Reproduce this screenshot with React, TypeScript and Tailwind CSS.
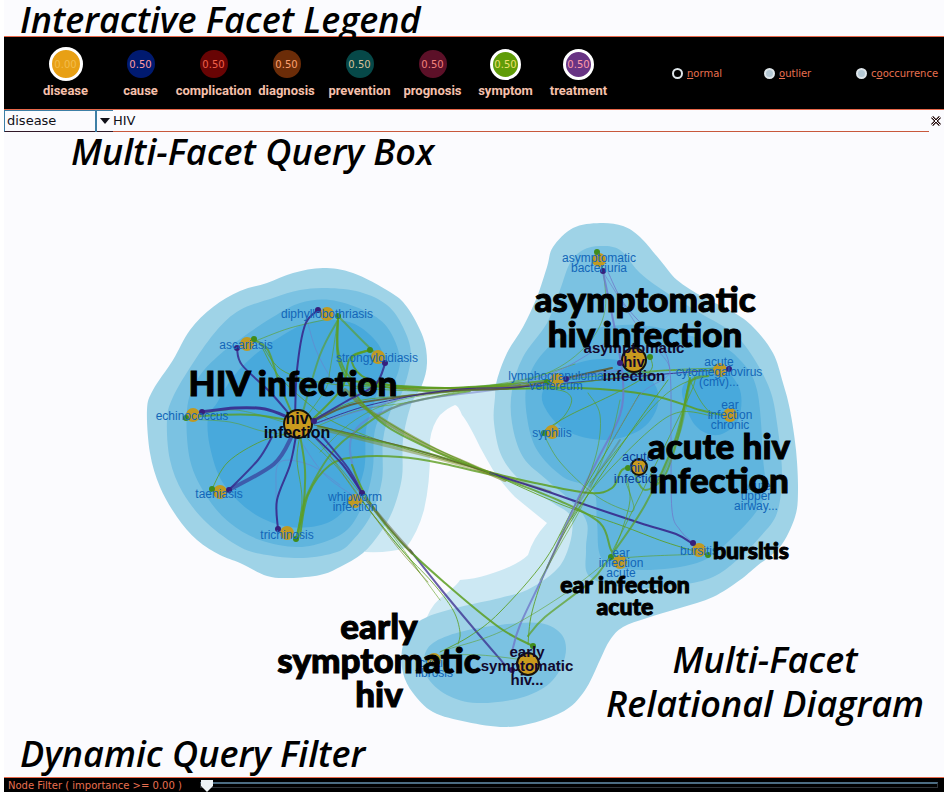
import { useState } from "react";

type Point = [number, number];

/** Turns a list of points into a smooth Catmull-Rom curve. */
function curve(points: Point[], closed = false): string {
  const n = points.length;
  const at = (i: number): Point =>
    closed ? points[(i + n) % n] : points[Math.max(0, Math.min(n - 1, i))];
  const segments = closed ? n : n - 1;
  let d = `M${points[0][0]} ${points[0][1]}`;
  for (let i = 0; i < segments; i++) {
    const [a, b, c, e] = [at(i - 1), at(i), at(i + 1), at(i + 2)];
    d += `C${b[0] + (c[0] - a[0]) / 6} ${b[1] + (c[1] - a[1]) / 6} ${c[0] - (e[0] - b[0]) / 6} ${c[1] - (e[1] - b[1]) / 6} ${c[0]} ${c[1]}`;
  }
  return closed ? d + "Z" : d;
}

const contours: { fill: string; points: Point[] }[] = [
  {
    fill: "#9fd3e7",
    points: [[147, 410], [153, 390], [173, 360], [190, 330], [213, 307], [240, 291], [267, 283], [293, 273], [323, 268], [353, 273], [390, 292], [407, 307], [423, 337], [427, 363], [422, 385], [411, 405], [403, 440], [402, 477], [393, 510], [380, 533], [363, 553], [340, 567], [320, 575], [290, 578], [267, 576], [240, 563], [220, 555], [197, 540], [177, 517], [160, 487], [150, 453]],
  },
  {
    fill: "#7bc2e2",
    points: [[167, 420], [173, 397], [193, 363], [217, 330], [240, 310], [273, 298], [300, 290], [327, 288], [360, 292], [387, 305], [403, 327], [411, 355], [403, 390], [391, 410], [383, 440], [382, 480], [371, 515], [353, 540], [337, 552], [303, 558], [267, 555], [240, 547], [207, 523], [183, 493], [170, 460]],
  },
  {
    fill: "#60b5de",
    points: [[187, 410], [197, 380], [217, 357], [243, 337], [273, 317], [300, 303], [330, 300], [363, 310], [387, 327], [400, 360], [390, 393], [375, 430], [373, 467], [366, 497], [350, 527], [327, 541], [297, 547], [260, 540], [230, 523], [207, 497], [190, 460]],
  },
  {
    fill: "#48a9dc",
    points: [[208, 417], [217, 403], [233, 377], [257, 353], [280, 337], [307, 323], [337, 320], [360, 327], [380, 347], [383, 370], [374, 403], [366, 430], [364, 470], [350, 503], [327, 523], [290, 527], [253, 513], [223, 483], [210, 447]],
  },
  {
    fill: "#9fd3e7",
    points: [[600, 223], [623, 226], [640, 237], [660, 260], [677, 280], [703, 297], [733, 312], [753, 327], [773, 353], [783, 383], [790, 410], [796, 450], [798, 490], [795, 517], [780, 547], [757, 566], [740, 580], [713, 597], [680, 608], [647, 618], [623, 627], [610, 640], [600, 660], [587, 687], [570, 707], [543, 720], [507, 727], [467, 722], [433, 712], [413, 693], [403, 673], [402, 650], [410, 630], [427, 617], [460, 607], [500, 598], [527, 590], [553, 573], [565, 557], [572, 533], [570, 515], [553, 503], [523, 483], [502, 457], [494, 423], [495, 397], [497, 380], [507, 353], [523, 327], [537, 297], [547, 267], [553, 247], [573, 228]],
  },
  {
    fill: "#7bc2e2",
    points: [[600, 246], [620, 250], [640, 273], [667, 293], [700, 313], [733, 333], [753, 357], [770, 390], [777, 423], [782, 473], [777, 513], [760, 537], [737, 560], [713, 577], [680, 585], [630, 588], [590, 577], [586, 550], [587, 523], [573, 503], [547, 480], [523, 457], [512, 423], [512, 390], [523, 357], [547, 323], [560, 290], [570, 263], [583, 250]],
  },
  {
    fill: "#60b5de",
    points: [[573, 333], [640, 325], [713, 343], [740, 360], [757, 390], [763, 457], [763, 500], [730, 540], [697, 563], [640, 570], [603, 560], [597, 523], [593, 490], [563, 477], [537, 450], [527, 417], [527, 383], [543, 353]],
  },
  {
    fill: "#48a9dc",
    points: [[542, 400], [555, 375], [590, 360], [630, 363], [655, 385], [657, 408], [640, 430], [605, 440], [565, 430]],
  },
  {
    fill: "#48a9dc",
    points: [[682, 390], [700, 372], [722, 368], [740, 390], [738, 420], [718, 435], [695, 425]],
  },
  {
    fill: "#7bc2e2",
    points: [[433, 643], [460, 632], [500, 625], [540, 623], [562, 635], [565, 657], [550, 683], [520, 698], [477, 703], [447, 695], [427, 677], [424, 658]],
  },
];

const green = "#5c9e20";
const purple = "#37298c";
const lilac = "#6f79c9";
const olive = "#5d5c35";
const moss = "#7a8420";

type Edge = [color: string, width: number, opacity: number, points: Point[]];

const edges: Edge[] = [
  // fans inside the hiv infection cluster
  [lilac, 1, 0.5, [[306, 316], [316, 350], [332, 380], [350, 405]]],
  [lilac, 1, 0.5, [[278, 529], [276, 490], [280, 462], [310, 465], [340, 485]]],
  [lilac, 1, 0.5, [[300, 440], [325, 475], [360, 500]]],
  [green, 1, 0.6, [[253, 342], [290, 328], [333, 318]]],
  [green, 2, 0.75, [[254, 340], [268, 350], [280, 385], [294, 418]]],
  [green, 1, 0.75, [[260, 343], [278, 375], [310, 405], [340, 425], [400, 447], [497, 474]]],
  [green, 1, 0.75, [[262, 345], [285, 372], [340, 385], [440, 388], [520, 386]]],
  [green, 2, 0.75, [[338, 316], [338, 350], [345, 371], [353, 380]]],
  [green, 2, 0.6, [[338, 320], [320, 355], [302, 415]]],
  [green, 1, 0.6, [[337, 325], [330, 370], [325, 390], [300, 425]]],
  [green, 2, 0.6, [[340, 318], [372, 350], [384, 356]]],
  [green, 2, 0.85, [[370, 350], [350, 358], [342, 388], [312, 420]]],
  [green, 2, 0.85, [[370, 350], [352, 358], [362, 376], [395, 386], [450, 388], [520, 385]]],
  [green, 2, 0.8, [[190, 417], [220, 415], [255, 415], [294, 421]]],
  [green, 1, 0.55, [[186, 419], [230, 422], [262, 431], [295, 436]]],
  [green, 1, 0.55, [[190, 417], [235, 410], [290, 424]]],
  [green, 1, 0.8, [[212, 489], [228, 462], [262, 441], [296, 432]]],
  [green, 2, 0.8, [[296, 538], [303, 510], [305, 470], [300, 435]]],
  [green, 1, 0.7, [[296, 538], [302, 500], [297, 460], [300, 435]]],
  [green, 2, 0.7, [[298, 538], [305, 500], [330, 455], [358, 430], [400, 405], [470, 391]]],
  [green, 2, 0.8, [[300, 536], [308, 495], [330, 465], [358, 457], [400, 457], [440, 463], [500, 477]]],
  [green, 1, 0.6, [[300, 432], [335, 465], [365, 505], [410, 560], [440, 600]]],
  // strands leaving for the right-hand cluster
  [green, 2, 0.85, [[353, 381], [400, 386], [450, 388], [510, 384], [566, 379]]],
  [green, 2, 0.85, [[360, 384], [430, 391], [500, 389], [580, 388], [650, 395], [700, 410], [722, 415]]],
  [green, 1, 0.7, [[352, 388], [420, 391], [480, 390], [550, 389], [571, 397], [565, 415], [547, 431]]],
  [green, 1, 0.7, [[300, 426], [350, 403], [400, 396], [470, 390], [560, 380], [650, 371], [720, 368]]],
  [green, 1, 0.55, [[320, 452], [355, 420], [400, 400], [470, 389], [540, 376], [584, 348], [605, 310], [601, 255]]],
  [green, 1, 0.55, [[320, 425], [360, 410], [410, 402], [470, 389], [530, 378], [575, 364]]],
  [lilac, 1, 0.7, [[320, 422], [370, 408], [430, 392], [500, 388], [560, 370], [610, 340]]],
  [lilac, 2, 0.5, [[360, 495], [350, 450], [357, 428], [380, 413], [425, 399], [500, 389], [620, 370]]],
  [olive, 2, 0.9, [[314, 421], [350, 405], [400, 397], [460, 390], [520, 387], [612, 368]]],
  [moss, 1, 0.8, [[390, 388], [440, 389], [500, 387], [560, 382]]],
  [purple, 1, 0.9, [[314, 424], [370, 405], [450, 390], [520, 387], [600, 380], [665, 374], [729, 369]]],
  [green, 1, 0.8, [[540, 387], [600, 380], [660, 371], [720, 371]]],
  [green, 2, 0.85, [[318, 426], [360, 437], [420, 451], [497, 474], [540, 484], [590, 493], [612, 488], [622, 470], [634, 466]]],
  [moss, 3, 0.45, [[318, 428], [380, 444], [440, 459], [500, 476], [550, 492]]],
  [moss, 4, 0.6, [[345, 390], [375, 415], [430, 447], [470, 465], [505, 480]]],
  [green, 2, 0.8, [[338, 318], [340, 365], [375, 417], [430, 449], [500, 477], [560, 501], [600, 523], [611, 550], [620, 562]]],
  [purple, 2, 0.9, [[490, 473], [540, 489], [583, 504], [640, 523], [676, 534], [693, 544]]],
  [olive, 1, 0.8, [[314, 425], [370, 438], [430, 454], [490, 473]]],
  [green, 1, 0.85, [[360, 405], [420, 441], [490, 473], [560, 504], [620, 525], [665, 542], [708, 555]]],
  [green, 1, 0.6, [[610, 559], [650, 556], [708, 554]]],
  // strands going down to early symptomatic hiv
  [green, 1, 0.6, [[310, 432], [350, 480], [400, 545], [420, 573]]],
  [purple, 2, 0.75, [[410, 550], [440, 588], [475, 630], [505, 665]]],
  [green, 2, 0.85, [[352, 465], [367, 498], [400, 541], [445, 583], [500, 628], [533, 646]]],
  [green, 1, 0.8, [[360, 498], [400, 548], [432, 582], [453, 610], [460, 632], [458, 644]]],
  [olive, 3, 0.5, [[365, 498], [390, 528], [412, 553]]],
  [moss, 1, 0.6, [[330, 456], [365, 504], [398, 548], [428, 582]]],
  [green, 1, 0.85, [[440, 652], [470, 636], [500, 612], [545, 560], [575, 505], [610, 445], [640, 393]]],
  [green, 1, 0.85, [[528, 644], [532, 612], [548, 565], [575, 515], [625, 440], [668, 380]]],
  [lilac, 2, 0.8, [[512, 652], [520, 625], [547, 568], [575, 505], [600, 455], [620, 415], [623, 380], [616, 335], [603, 272]]],
  [olive, 2, 0.3, [[547, 568], [575, 510], [595, 478], [620, 440]]],
  [green, 2, 0.7, [[528, 636], [545, 617], [590, 582], [610, 557], [645, 505], [675, 440], [690, 378]]],
  [green, 1, 0.55, [[445, 650], [500, 632], [560, 597], [605, 563]]],
  [green, 1, 0.55, [[440, 655], [480, 655], [525, 660]]],
  // strands inside the right-hand cluster
  [green, 1, 0.6, [[543, 433], [560, 462], [595, 495], [625, 510], [634, 508], [625, 480]]],
  [green, 1, 0.8, [[545, 430], [570, 415], [610, 396], [640, 380], [652, 368], [650, 357]]],
  [green, 1, 0.6, [[588, 393], [600, 415], [596, 455], [575, 510], [560, 535]]],
  [green, 1, 0.7, [[712, 416], [680, 412], [650, 430], [600, 480], [570, 520]]],
  [green, 2, 0.7, [[708, 376], [690, 383], [680, 430], [665, 475], [645, 490], [635, 475]]],
  [green, 3, 0.4, [[690, 380], [680, 430], [660, 480]]],
  [green, 1, 0.7, [[712, 375], [680, 385], [650, 410], [590, 483]]],
  [green, 1, 0.7, [[712, 415], [700, 400], [688, 375], [695, 380], [680, 415], [612, 552]]],
  [green, 1, 0.7, [[626, 475], [630, 500], [622, 530], [613, 553]]],
  [lilac, 1, 0.8, [[608, 272], [625, 305], [660, 345], [670, 372], [671, 440], [672, 510], [680, 530], [692, 542]]],
  [lilac, 1, 0.6, [[603, 272], [640, 330], [670, 370], [640, 395], [610, 445]]],
  [green, 1, 0.55, [[620, 400], [610, 440], [585, 500], [560, 545], [540, 580]]],
  // spokes of the hiv infection hub
  [purple, 2, 0.9, [[295, 420], [297, 370], [305, 325], [318, 310]]],
  [purple, 2, 0.85, [[290, 415], [270, 392], [242, 365], [237, 349]]],
  [purple, 2, 0.85, [[314, 420], [345, 402], [375, 385], [385, 364]]],
  [purple, 3, 0.9, [[290, 418], [265, 409], [235, 408], [202, 412]]],
  [purple, 2, 0.85, [[272, 437], [258, 460], [229, 490]]],
  [purple, 4, 0.6, [[292, 436], [274, 464], [229, 490]]],
  [purple, 2, 0.9, [[296, 436], [290, 465], [277, 500], [278, 529]]],
  [purple, 2, 0.9, [[314, 436], [342, 464], [362, 493]]],
  [purple, 2, 0.8, [[322, 436], [348, 468], [362, 493]]],
];

const nodes: Point[] = [
  [327, 314], [247, 344], [378, 357], [193, 415], [220, 492], [355, 501], [287, 533], [599, 260],
  [557, 380], [720, 370], [552, 432], [730, 415], [620, 562], [699, 550], [434, 660],
];

const hubs: { at: Point; r: number }[] = [
  { at: [298, 424], r: 14 },
  { at: [634, 360], r: 12 },
  { at: [639, 467], r: 8 },
  { at: [528, 664], r: 11 },
];

const purpleTips: Point[] = [[318, 310], [237, 348], [385, 363], [202, 412], [229, 490], [278, 529], [362, 493], [314, 421], [603, 271], [566, 379], [620, 363], [729, 369], [693, 543], [512, 670]];
const greenTips: Point[] = [[338, 316], [254, 339], [370, 350], [186, 418], [212, 489], [296, 539], [597, 252], [650, 357], [544, 433], [611, 557], [708, 555], [628, 468], [533, 646], [547, 382]];

type Label = { x: number; y: number; lines: string[] };

const minorLabels: Label[] = [
  { x: 327, y: 318, lines: ["diphyllobothriasis"] },
  { x: 246, y: 349, lines: ["ascariasis"] },
  { x: 377, y: 362, lines: ["strongyloidiasis"] },
  { x: 192, y: 420, lines: ["echinococcus"] },
  { x: 219, y: 498, lines: ["taeniasis"] },
  { x: 355, y: 501, lines: ["whipworm", "infection"] },
  { x: 287, y: 539, lines: ["trichinosis"] },
  { x: 599, y: 262, lines: ["asymptomatic", "bacteriuria"] },
  { x: 556, y: 380, lines: ["lymphogranuloma", "venereum"] },
  { x: 719, y: 366, lines: ["acute", "cytomegalovirus", "(cmv)..."] },
  { x: 552, y: 437, lines: ["syphilis"] },
  { x: 730, y: 409, lines: ["ear", "infection", "chronic"] },
  { x: 756, y: 490, lines: ["acute", "upper", "airway..."] },
  { x: 699, y: 555, lines: ["bursitis"] },
  { x: 621, y: 557, lines: ["ear", "infection", "acute"] },
  { x: 434, y: 667, lines: ["cystic", "fibrosis"] },
];

const hubLabels: (Label & { step: number; tone: string })[] = [
  { x: 297, y: 424, step: 14, lines: ["hiv", "infection"], tone: "text-[16px] font-bold fill-[#080818]" },
  { x: 634, y: 353, step: 14, lines: ["asymptomatic", "hiv", "infection"], tone: "text-[15px] font-bold fill-[#12082c]" },
  { x: 638, y: 461, step: 11, lines: ["acute", "hiv", "infection"], tone: "text-[13px] fill-[#0b3f9a]" },
  { x: 527, y: 657, step: 14, lines: ["early", "symptomatic", "hiv..."], tone: "text-[15px] font-bold fill-[#12082c]" },
];

const majorLabels: (Label & { step: number; size: string })[] = [
  { x: 293, y: 396, step: 34, size: "text-[35px]", lines: ["HIV infection"] },
  { x: 645, y: 312, step: 35, size: "text-[35px]", lines: ["asymptomatic", "hiv infection"] },
  { x: 719, y: 459, step: 34, size: "text-[35px]", lines: ["acute hiv", "infection"] },
  { x: 751, y: 559, step: 22, size: "text-[23px]", lines: ["bursltis"] },
  { x: 625, y: 593, step: 22, size: "text-[23px]", lines: ["ear infection", "acute"] },
  { x: 379, y: 639, step: 34, size: "text-[35px]", lines: ["early", "symptomatic", "hiv"] },
];

function Lines({ label, step }: { label: Label; step: number }) {
  return (
    <text x={label.x} y={label.y} textAnchor="middle">
      {label.lines.map((line, i) => (
        <tspan key={i} x={label.x} y={label.y + i * step}>
          {line}
        </tspan>
      ))}
    </text>
  );
}

function Diagram() {
  return (
    <svg viewBox="4 172 940 562" className="block h-auto w-full" role="img" aria-label="Multi-facet relational diagram">
      <path
        fill="#cce8f3"
        d="M420 386Q460 390 505 382L600 480L600 600Q520 600 427 617Q433 602 447 593Q458 584 460 580Q475 579 487 575Q517 566 528 555Q533 538 547 523Q532 511 515 497Q503 485 493 470Q487 460 480 447Q468 422 462 415Q458 405 455 405Q449 407 440 415Q432 425 430 440Q431 480 424 510Q418 532 406 548Q390 553 365 552L370 430Z"
      />
      {contours.map((c, i) => (
        <path key={i} fill={c.fill} d={curve(c.points, true)} />
      ))}
      <g fill="none" strokeLinecap="round">
        {edges.map(([color, width, opacity, points], i) => (
          <path key={i} stroke={color} strokeWidth={width} strokeOpacity={opacity} d={curve(points)} />
        ))}
      </g>
      {nodes.map(([x, y]) => (
        <circle key={`${x}-${y}`} cx={x} cy={y} r={7} fill="#c09a22" />
      ))}
      {hubs.map(({ at, r }) => (
        <circle key={at[0]} cx={at[0]} cy={at[1]} r={r} fill="#c99a1e" stroke="#16130c" strokeWidth={2} />
      ))}
      {purpleTips.map(([x, y]) => (
        <circle key={`${x}-${y}`} cx={x} cy={y} r={3} fill="#36207c" />
      ))}
      {greenTips.map(([x, y]) => (
        <circle key={`${x}-${y}`} cx={x} cy={y} r={3} fill="#3f8c1c" />
      ))}
      <g className="fill-[#1266b8] font-['Liberation_Sans',Arial,sans-serif] text-[12px]">
        {minorLabels.map((label, i) => (
          <Lines key={i} label={label} step={10} />
        ))}
      </g>
      {hubLabels.map((label, i) => (
        <g key={i} className={`font-['Liberation_Sans',Arial,sans-serif] ${label.tone}`}>
          <Lines label={label} step={label.step} />
        </g>
      ))}
      {majorLabels.map((label, i) => (
        <g key={i} className={`fill-black stroke-black stroke-1 font-['Lato',sans-serif] font-black ${label.size}`}>
          <Lines label={label} step={label.step} />
        </g>
      ))}
    </svg>
  );
}

const facets = [
  { name: "disease", value: "0.00", look: "size-[34px] border-[3px] border-white bg-[#e8a015] text-[#f3bd4c]" },
  { name: "cause", value: "0.50", look: "size-7 bg-[#001a70] text-[#ff9aa0]" },
  { name: "complication", value: "0.50", look: "size-7 bg-[#680404] text-[#f0604a]" },
  { name: "diagnosis", value: "0.50", look: "size-7 bg-[#6b2c08] text-[#ffa070]" },
  { name: "prevention", value: "0.50", look: "size-7 bg-[#064848] text-[#d5c09a]" },
  { name: "prognosis", value: "0.50", look: "size-7 bg-[#5c1028] text-[#f4807c]" },
  { name: "symptom", value: "0.50", look: "size-[31px] border-[3px] border-white bg-[#609c08] text-[#f0e070]" },
  { name: "treatment", value: "0.50", look: "size-[31px] border-[3px] border-white bg-[#683484] text-[#ff9aa8]" },
];

const modes = [
  { id: "normal", before: "", key: "n", after: "ormal" },
  { id: "outlier", before: "", key: "o", after: "utlier" },
  { id: "cooccurrence", before: "c", key: "o", after: "occurrence" },
];

const title = "font-['Open_Sans',sans-serif] font-semibold italic text-black";

export default function App() {
  const [mode, setMode] = useState("normal");
  const [facet, setFacet] = useState("disease");
  const [query, setQuery] = useState("HIV");
  const [threshold, setThreshold] = useState(0);

  return (
    <div className="bg-white pr-[7px] pb-3 pl-1">
      <main className="bg-[#fbfbfe]">
        <h1 className={`${title} h-9 pl-4 text-4xl/10`}>Interactive Facet Legend</h1>

        <section className="flex h-[74px] items-center justify-between border-y border-[#e8684a] bg-black">
          <div className="flex h-full pl-[25px]">
            {facets.map((f) => (
              <button key={f.name} type="button" className="flex w-[73px] flex-col items-center first:mr-0.5">
                <span className="flex h-[54px] items-center">
                  <span
                    className={`flex items-center justify-center rounded-full font-['DejaVu_Sans',sans-serif] text-[10px] ${f.look}`}
                  >
                    {f.value}
                  </span>
                </span>
                <span className="-mt-2 font-['Roboto',sans-serif] text-[13px] leading-4 font-bold text-[#f6c0ac]">
                  {f.name}
                </span>
              </button>
            ))}
          </div>
          <fieldset className="flex h-4 font-['DejaVu_Sans',sans-serif] text-[10px] text-[#e87050]">
            {modes.map((m) => (
              <label key={m.id} className="flex w-[92px] items-center gap-1 whitespace-nowrap last:w-[88px]">
                <input
                  type="radio"
                  name="mode"
                  checked={mode === m.id}
                  onChange={() => setMode(m.id)}
                  className="size-[11px] shrink-0 appearance-none rounded-full border-2 border-[#dfe6ea] bg-[#b4c8d4] checked:bg-black"
                />
                <span>
                  {m.before}
                  <u>{m.key}</u>
                  {m.after}
                </span>
              </label>
            ))}
          </fieldset>
        </section>

        <form
          className="flex h-[22px] items-stretch font-['DejaVu_Sans',sans-serif] text-[13px] text-[#101018]"
          onSubmit={(e) => e.preventDefault()}
        >
          <div className="relative w-[109px]">
            <select
              aria-label="Facet"
              value={facet}
              onChange={(e) => setFacet(e.target.value)}
              className="h-full w-full appearance-none border-y border-l border-[#3d7fa6] border-b-[#301828] pl-0.5"
            >
              {facets.map((f) => (
                <option key={f.name}>{f.name}</option>
              ))}
            </select>
            <span className="pointer-events-none absolute inset-y-0 right-0 flex w-[18px] items-center justify-center border-l-2 border-[#3d7fa6]">
              <svg viewBox="0 0 10 6" className="w-2.5">
                <path d="M0 0H10L5 6Z" fill="#101018" />
              </svg>
            </span>
          </div>
          <input
            aria-label="Query"
            value={query}
            onChange={(e) => setQuery(e.target.value)}
            className="min-w-0 flex-1 border-b border-[#c8583c] outline-none"
          />
          <button type="button" aria-label="Clear query" onClick={() => setQuery("")} className="w-[15px] pl-0.5">
            <svg viewBox="0 0 10 10" className="w-2.5">
              <path d="M1 1L9 9M9 1L1 9" stroke="#281010" strokeWidth="3" />
              <path d="M1 1L9 9M9 1L1 9" stroke="#fbfbfe" strokeWidth="1" />
            </svg>
          </button>
        </form>

        <h2 className={`${title} pl-[67px] text-4xl/10`}>Multi-Facet Query Box</h2>

        <figure className="relative">
          <Diagram />
          <figcaption className={`${title} absolute right-5 bottom-2 text-center text-4xl/11`}>
            Multi-Facet
            <br />
            Relational Diagram
          </figcaption>
        </figure>

        <h2 className={`${title} h-[43px] pl-4 text-4xl/10`}>Dynamic Query Filter</h2>

        <footer className="flex h-[15px] items-center border-t border-[#e8684a] bg-black pr-1.5 pl-1 font-['DejaVu_Sans',sans-serif] text-[10px] text-[#e87050]">
          <label htmlFor="node-filter" className="w-[192px] whitespace-nowrap">
            Node Filter ( importance &gt;= {threshold.toFixed(2)} )
          </label>
          <input
            id="node-filter"
            type="range"
            min={0}
            max={1}
            step={0.01}
            value={threshold}
            onChange={(e) => setThreshold(Number(e.target.value))}
            className="h-3 min-w-0 flex-1 appearance-none bg-transparent [&::-webkit-slider-runnable-track]:h-1.5 [&::-webkit-slider-runnable-track]:border [&::-webkit-slider-runnable-track]:border-t-2 [&::-webkit-slider-runnable-track]:border-[#303438] [&::-webkit-slider-runnable-track]:border-t-[#4c6c82] [&::-webkit-slider-thumb]:-mt-1 [&::-webkit-slider-thumb]:h-3 [&::-webkit-slider-thumb]:w-3 [&::-webkit-slider-thumb]:appearance-none [&::-webkit-slider-thumb]:bg-[#eef3f6] [&::-webkit-slider-thumb]:[clip-path:polygon(0_0,100%_0,100%_50%,50%_100%,0_50%)]"
          />
        </footer>
      </main>
    </div>
  );
}
